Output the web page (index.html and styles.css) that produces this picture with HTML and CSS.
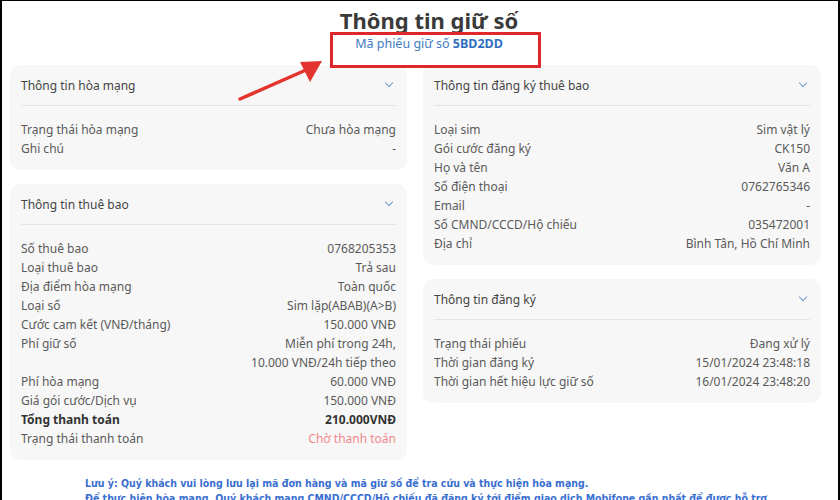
FILE: index.html
```html
<!DOCTYPE html>
<html lang="vi">
<head>
  <meta charset="UTF-8">
  <title>Thông tin giữ số</title>
  <link rel="stylesheet" href="styles.css">
</head>
<body>
  <div class="frame">
    <div class="page-head">
      <h1>Thông tin giữ số</h1>
      <p class="ticket">Mã phiếu giữ số <b>5BD2DD</b></p>
      <div class="mark-box"></div>
      <svg class="mark-arrow" width="100" height="50" viewBox="0 0 100 50">
        <line x1="6" y1="44" x2="72" y2="15" stroke="#e3342f" stroke-width="3.5" stroke-linecap="round"/>
        <polygon points="88,6 66,7 76,27" fill="#e3342f"/>
      </svg>
    </div>

    <div class="columns">
      <div class="col">
        <div class="card">
          <div class="card-head">Thông tin hòa mạng <span class="chev"></span></div>
          <div class="card-body">
            <div class="row"><span>Trạng thái hòa mạng</span><span>Chưa hòa mạng</span></div>
            <div class="row"><span>Ghi chú</span><span>-</span></div>
          </div>
        </div>

        <div class="card">
          <div class="card-head">Thông tin thuê bao <span class="chev"></span></div>
          <div class="card-body">
            <div class="row"><span>Số thuê bao</span><span>0768205353</span></div>
            <div class="row"><span>Loại thuê bao</span><span>Trả sau</span></div>
            <div class="row"><span>Địa điểm hòa mạng</span><span>Toàn quốc</span></div>
            <div class="row"><span>Loại số</span><span>Sim lặp(ABAB)(A&gt;B)</span></div>
            <div class="row"><span>Cước cam kết (VNĐ/tháng)</span><span>150.000 VNĐ</span></div>
            <div class="row"><span>Phí giữ số</span><span>Miễn phí trong 24h,<br>10.000 VNĐ/24h tiếp theo</span></div>
            <div class="row"><span>Phí hòa mạng</span><span>60.000 VNĐ</span></div>
            <div class="row"><span>Giá gói cước/Dịch vụ</span><span>150.000 VNĐ</span></div>
            <div class="row total"><span>Tổng thanh toán</span><span>210.000VNĐ</span></div>
            <div class="row"><span>Trạng thái thanh toán</span><span class="pending">Chờ thanh toán</span></div>
          </div>
        </div>
      </div>

      <div class="col">
        <div class="card">
          <div class="card-head">Thông tin đăng ký thuê bao <span class="chev"></span></div>
          <div class="card-body">
            <div class="row"><span>Loại sim</span><span>Sim vật lý</span></div>
            <div class="row"><span>Gói cước đăng ký</span><span>CK150</span></div>
            <div class="row"><span>Họ và tên</span><span>Văn A</span></div>
            <div class="row"><span>Số điện thoại</span><span>0762765346</span></div>
            <div class="row"><span>Email</span><span>-</span></div>
            <div class="row"><span>Số CMND/CCCD/Hộ chiếu</span><span>035472001</span></div>
            <div class="row"><span>Địa chỉ</span><span>Bình Tân, Hồ Chí Minh</span></div>
          </div>
        </div>

        <div class="card">
          <div class="card-head">Thông tin đăng ký <span class="chev"></span></div>
          <div class="card-body">
            <div class="row"><span>Trạng thái phiếu</span><span>Đang xử lý</span></div>
            <div class="row"><span>Thời gian đăng ký</span><span>15/01/2024 23:48:18</span></div>
            <div class="row"><span>Thời gian hết hiệu lực giữ số</span><span>16/01/2024 23:48:20</span></div>
          </div>
        </div>
      </div>
    </div>

    <div class="note">
      <p>Lưu ý: Quý khách vui lòng lưu lại mã đơn hàng và mã giữ số để tra cứu và thực hiện hòa mạng.</p>
      <p>Để thực hiện hòa mạng, Quý khách mang CMND/CCCD/Hộ chiếu đã đăng ký tới điểm giao dịch Mobifone gần nhất để được hỗ trợ.</p>
    </div>
  </div>
</body>
</html>
```

FILE: styles.css
```css
html, body {
  margin: 0;
  padding: 0;
  background: #ffffff;
  overflow: hidden;
}

body {
  font-family: "Noto Sans", "DejaVu Sans", sans-serif;
  color: #555;
}

.frame {
  width: 836px;
  height: 499px;
  border-top: 1px solid #000;
  border-left: 2px solid #000;
  border-right: 2px solid #000;
  overflow: hidden;
}

.page-head {
  position: relative;
  height: 64px;
  padding-left: 18px;
  text-align: center;
}

h1 {
  margin: 0;
  padding-top: 4px;
  font-size: 22px;
  line-height: 30px;
  font-weight: 700;
  color: #3a3a3a;
}

.ticket {
  margin: 1px 0 0;
  font-size: 12.5px;
  line-height: 16px;
  color: #3f7cc4;
}

.ticket b {
  font-weight: 700;
  color: #2f6fbf;
}

.mark-box {
  position: absolute;
  left: 328px;
  top: 31px;
  width: 205px;
  height: 30px;
  border: 3px solid #e0282c;
}

.mark-arrow {
  position: absolute;
  left: 232px;
  top: 54px;
}

.columns {
  display: grid;
  grid-template-columns: 397px 398px;
  column-gap: 16px;
  padding-left: 8px;
}

.col {
  display: flex;
  flex-direction: column;
  gap: 14px;
}

.card {
  background: #f7f7f7;
  border-radius: 10px;
  padding: 0 11px 12px;
}

.card-head {
  height: 40px;
  display: flex;
  align-items: center;
  justify-content: space-between;
  border-bottom: 1px solid #e4e4e4;
  font-size: 12px;
  color: #444;
}

.chev {
  width: 5px;
  height: 5px;
  margin-right: 4px;
  margin-top: -4px;
  border-right: 1px solid #6b9bd1;
  border-bottom: 1px solid #6b9bd1;
  transform: rotate(45deg);
}

.card-body {
  padding-top: 14px;
}

.row {
  display: flex;
  justify-content: space-between;
  font-size: 12px;
  line-height: 19px;
  color: #5a5a5a;
}

.row span:last-child {
  text-align: right;
}

.row.total {
  font-weight: 700;
  color: #333;
}

.pending {
  color: #f08a8a;
}

.note {
  padding: 16px 0 0 83px;
  font-family: "DejaVu Sans Condensed", "DejaVu Sans", sans-serif;
  font-stretch: condensed;
  font-size: 10.5px;
  font-weight: 700;
  color: #3a6fcf;
}

.note p {
  margin: 0;
  line-height: 15px;
}
```
